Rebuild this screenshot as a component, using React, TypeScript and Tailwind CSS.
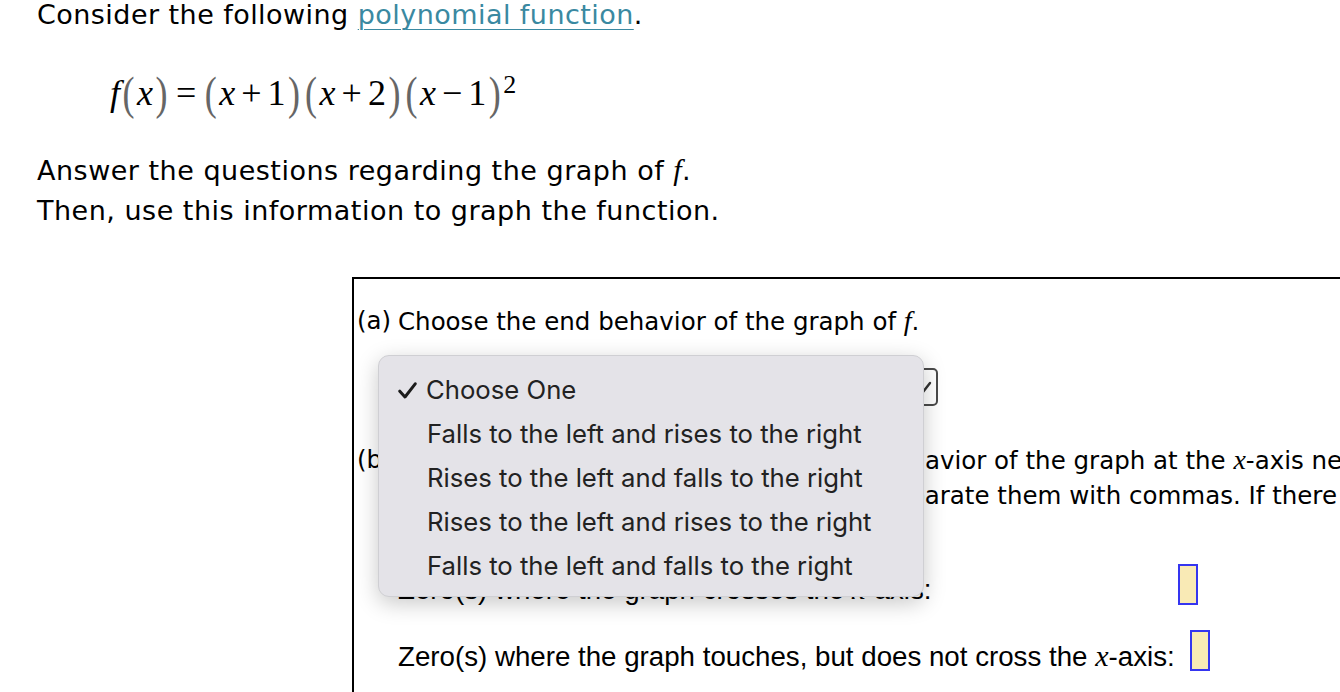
const verdana = { fontFamily: '"DejaVu Sans", Verdana, sans-serif' }

function Paren({ children }: { children: string }) {
  return <span className="text-[#666] scale-y-[1.3] inline-block mx-[2.5px]">{children}</span>
}

function Op({ children }: { children: string }) {
  return <span className="mx-[6px]">{children}</span>
}

function Formula() {
  return (
    <div className="ml-[110px] mt-[38px] h-[50px] leading-[50px] text-[36px] text-black font-['Liberation_Serif',serif] whitespace-nowrap">
      <span className="italic">f</span>
      <Paren>(</Paren>
      <span className="italic">x</span>
      <Paren>)</Paren>
      <Op>=</Op>
      <Paren>(</Paren>
      <span className="italic">x</span>
      <Op>+</Op>
      <span>1</span>
      <Paren>)</Paren>
      <Paren>(</Paren>
      <span className="italic">x</span>
      <Op>+</Op>
      <span>2</span>
      <Paren>)</Paren>
      <Paren>(</Paren>
      <span className="italic">x</span>
      <Op>−</Op>
      <span>1</span>
      <Paren>)</Paren>
      <span className="text-[26px] align-top relative -top-[8px]">2</span>
    </div>
  )
}

function Blank({ lift }: { lift: string }) {
  return <span className={`block w-[20px] h-[41px] border-2 border-[#3535f0] bg-[#f9eab5] ${lift}`} />
}

function Check() {
  return (
    <svg width="19" height="17" viewBox="0 0 19 17" className="ml-[19px] mr-[9px]">
      <path d="M1.8 9.2 L7 15 L17.2 1.8" fill="none" stroke="#1c1c1c" strokeWidth="3" strokeLinecap="round" strokeLinejoin="round" />
    </svg>
  )
}

const options = [
  'Falls to the left and rises to the right',
  'Rises to the left and falls to the right',
  'Rises to the left and rises to the right',
  'Falls to the left and falls to the right',
]

function Menu() {
  return (
    <div className="absolute left-[378px] top-[355px] w-[546px] h-[242px] rounded-[11px] bg-[#e4e3e8] border border-[#cfcfd3] shadow-[0_6px_22px_rgba(0,0,0,0.22)] pt-[12px] font-['Inter',sans-serif] text-[25.7px] text-[#222]">
      <div className="h-[44px] flex items-center">
        <Check />
        <span>Choose One</span>
      </div>
      {options.map((o) => (
        <div key={o} className="h-[44px] flex items-center pl-[48px]">
          {o}
        </div>
      ))}
    </div>
  )
}

const It = ({ c, size = 'text-[28px]' }: { c: string; size?: string }) => (
  <span className={`italic font-['Liberation_Serif',serif] ${size}`}>{c}</span>
)

export default function App() {
  return (
    <div className="relative w-[1340px] h-[692px] overflow-hidden bg-white text-black" style={verdana}>
      <div className="pl-[37px] text-[27px] leading-[30px] tracking-[0.45px]">
        Consider the following{' '}
        <span className="text-[#3a89a1] underline underline-offset-[5px] decoration-1">polynomial function</span>.
      </div>
      <Formula />
      <div className="pl-[37px] mt-[32px] text-[27px] leading-[40px] tracking-[0.5px]">
        <div>
          Answer the questions regarding the graph of <It c="f" size="text-[30px]" />.
        </div>
        <div>Then, use this information to graph the function.</div>
      </div>

      <div className="ml-[352px] mt-[46px] w-[1100px] border-t-2 border-l-2 border-black pl-[3px] pt-[25px] pb-[80px] text-[24.5px]">
        <div className="flex leading-[34px]">
          <span className="w-[41px]">(a)</span>
          <span>
            Choose the end behavior of the graph of <It c="f" />.
          </span>
        </div>
        <div className="relative ml-[41px] mt-[29px] w-[540px] h-[38px] rounded-[5px] border-2 border-[#4a4a4a] flex items-center px-3 text-[20px]">
          <span>Choose One</span>
          <svg width="18" height="13" viewBox="0 0 18 13" className="absolute right-[4px] top-[11px]">
            <path d="M2 2 L9 11 L16 2" fill="none" stroke="#333" strokeWidth="2.4" strokeLinecap="round" />
          </svg>
        </div>
        <div className="flex mt-[36px] leading-[35px]">
          <span className="w-[41px]">(b)</span>
          <span className="whitespace-nowrap">
            List each real zero of <It c="f" /> according to the behavior of the graph at the <It c="x" />-axis near
            <br />
            <span className="tracking-[-0.33px]">that zero. If there is more than one zero, sep</span>arate them with commas. If there is no zero, click on "None".
          </span>
        </div>
        <div className="ml-[41px] mt-[54px] font-['Liberation_Sans',sans-serif] text-[27.7px]">
          <div className="flex items-center h-[42px]">
            <span className="w-[780px] whitespace-nowrap">
              Zero(s) where the graph crosses the <It c="x" size="text-[30px]" />-axis:
            </span>
            <Blank lift="-translate-y-[4px]" />
          </div>
          <div className="flex items-center h-[42px] mt-[25px]">
            <span className="w-[792px] whitespace-nowrap">
              Zero(s) where the graph touches, but does not cross the <It c="x" size="text-[30px]" />-axis:
            </span>
            <Blank lift="-translate-y-[5px]" />
          </div>
        </div>
      </div>

      <Menu />
    </div>
  )
}
